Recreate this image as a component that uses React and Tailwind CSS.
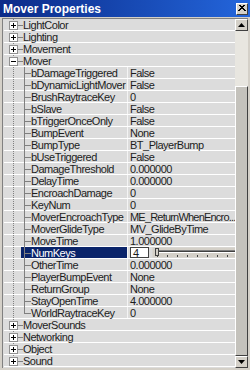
const collapsedTop = ["LightColor", "Lighting", "Movement"];
const bottomTop = ["MoverSounds", "Networking", "Object", "Sound"];

const moverProps = [
  ["bDamageTriggered", "False"],
  ["bDynamicLightMover", "False"],
  ["BrushRaytraceKey", "0"],
  ["bSlave", "False"],
  ["bTriggerOnceOnly", "False"],
  ["BumpEvent", "None"],
  ["BumpType", "BT_PlayerBump"],
  ["bUseTriggered", "False"],
  ["DamageThreshold", "0.000000"],
  ["DelayTime", "0.000000"],
  ["EncroachDamage", "0"],
  ["KeyNum", "0"],
  ["MoverEncroachType", "ME_ReturnWhenEncro..."],
  ["MoverGlideType", "MV_GlideByTime"],
  ["MoveTime", "1.000000"],
  ["NumKeys", "4", true],
  ["OtherTime", "0.000000"],
  ["PlayerBumpEvent", "None"],
  ["ReturnGroup", "None"],
  ["StayOpenTime", "4.000000"],
  ["WorldRaytraceKey", "0"],
];

function Expander({ open }) {
  return (
    <svg width="19" height="12" className="shrink-0">
      <line x1="9.5" y1="0" x2="9.5" y2="12" stroke="#808080" strokeDasharray="1 1" />
      <rect x="5.5" y="2.5" width="8" height="8" fill="#ffffff" stroke="#909090" />
      <line x1="7" y1="6.5" x2="12" y2="6.5" stroke="#000" />
      {!open && <line x1="9.5" y1="4" x2="9.5" y2="9" stroke="#000" />}
      <line x1="14" y1="6.5" x2="19" y2="6.5" stroke="#808080" />
    </svg>
  );
}

function ChildLines() {
  return (
    <svg width="17" height="12" className="shrink-0">
      <line x1="9.5" y1="0" x2="9.5" y2="12" stroke="#808080" strokeDasharray="1 1" />
    </svg>
  );
}

function Branch({ last }) {
  return (
    <svg width="10" height="12" className="shrink-0">
      <line x1="3.5" y1="0" x2="3.5" y2={last ? 6.5 : 12} stroke="#808080" />
      <line x1="3" y1="6.5" x2="10" y2="6.5" stroke="#808080" />
    </svg>
  );
}

function TopRow({ label }) {
  return (
    <div className="flex h-[12px] items-center border-b border-white bg-[#dcdcdc]">
      <Expander open={label === "Mover"} />
      <span className="leading-[12px]">{label}</span>
    </div>
  );
}

function Slider() {
  return (
    <div className="flex h-full items-center gap-[3px]">
      <div className="flex h-[11px] w-[19px] items-center border border-[#404040] bg-white pl-[2px] leading-[10px]">4</div>
      <svg width="88" height="11">
        <rect x="0.5" y="0.5" width="87" height="10" fill="#d4d0c8" />
        <line x1="3" y1="3.5" x2="85" y2="3.5" stroke="#808080" />
        <line x1="3" y1="4.5" x2="85" y2="4.5" stroke="#404040" />
        <line x1="3" y1="5.5" x2="85" y2="5.5" stroke="#ffffff" />
        <rect x="3.5" y="1.5" width="3" height="7" fill="#d4d0c8" stroke="#404040" />
        {[5, 15, 25, 35, 45, 55, 65, 75, 84].map((x) => (
          <line key={x} x1={x + 0.5} y1="8" x2={x + 0.5} y2="10" stroke="#404040" />
        ))}
      </svg>
    </div>
  );
}

function PropRow({ name, value, selected, last }) {
  const long = value.length > 16;
  return (
    <div className="flex h-[12px] border-b border-white bg-[#dcdcdc]">
      <div className="flex w-[123px] shrink-0 items-center whitespace-nowrap">
        <ChildLines />
        <div className={`flex h-full flex-1 items-center ${selected ? "bg-[#0a246a] text-white" : ""}`}>
          <Branch last={last} />
          <span className="leading-[12px]">{name}</span>
        </div>
      </div>
      <div className={`relative z-10 flex-1 overflow-x-clip whitespace-nowrap border-l border-[#f4f4f4] bg-[#dcdcdc] pl-[2px] leading-[12px] ${long ? "tracking-[-0.8px]" : ""}`}>
        {selected ? <Slider /> : value}
      </div>
    </div>
  );
}

export default function App() {
  return (
    <div
      className="flex h-[370px] w-[250px] flex-col bg-[#d4d0c8] text-[11px] tracking-[-0.5px] text-[#1c1c1c]"
      style={{ fontFamily: '"Liberation Sans", Arial, sans-serif' }}
    >
      <div className="flex h-[17px] shrink-0 items-center justify-between bg-gradient-to-r from-[#0c2a88] to-[#2466dc] pl-[3px] pr-[2px]">
        <span className="text-[12px] font-bold tracking-normal text-white">Mover Properties</span>
        <div className="flex h-[12px] w-[12px] items-center justify-center border border-t-white border-l-white border-r-[#404040] border-b-[#404040] bg-[#d4d0c8]">
          <svg width="8" height="7" viewBox="0 0 8 7">
            <path d="M1 0 L7 6 M7 0 L1 6 M2 0 L8 6 M6 0 L0 6" stroke="#000" strokeWidth="1" />
          </svg>
        </div>
      </div>
      <div className="mx-[2px] mt-[1px] mb-[2px] flex flex-1 overflow-hidden border-t border-l border-[#808080]">
        <div className="flex-1 overflow-hidden bg-[#dcdcdc] pl-[1px]">
          {collapsedTop.map((t) => (
            <TopRow key={t} label={t} />
          ))}
          <TopRow label="Mover" />
          {moverProps.map(([n, v, sel], i) => (
            <PropRow key={n} name={n} value={v} selected={sel} last={i === moverProps.length - 1} />
          ))}
          {bottomTop.map((t) => (
            <TopRow key={t} label={t} />
          ))}
        </div>
        <div className="flex w-[13px] shrink-0 flex-col bg-[#e8e6e0]">
          <div className="flex h-[12px] items-center justify-center border border-t-white border-l-white border-r-[#404040] border-b-[#404040] bg-[#d4d0c8]">
            <svg width="7" height="4"><path d="M3.5 0 L7 4 L0 4 Z" fill="#000" /></svg>
          </div>
          <div className="h-[55px]" />
          <div className="flex-1 border border-t-white border-l-white border-r-[#404040] border-b-[#404040] bg-[#c4c2bc]" />
          <div className="flex h-[12px] items-center justify-center border border-t-white border-l-white border-r-[#404040] border-b-[#404040] bg-[#d4d0c8]">
            <svg width="7" height="4"><path d="M0 0 L7 0 L3.5 4 Z" fill="#000" /></svg>
          </div>
        </div>
      </div>
    </div>
  );
}
